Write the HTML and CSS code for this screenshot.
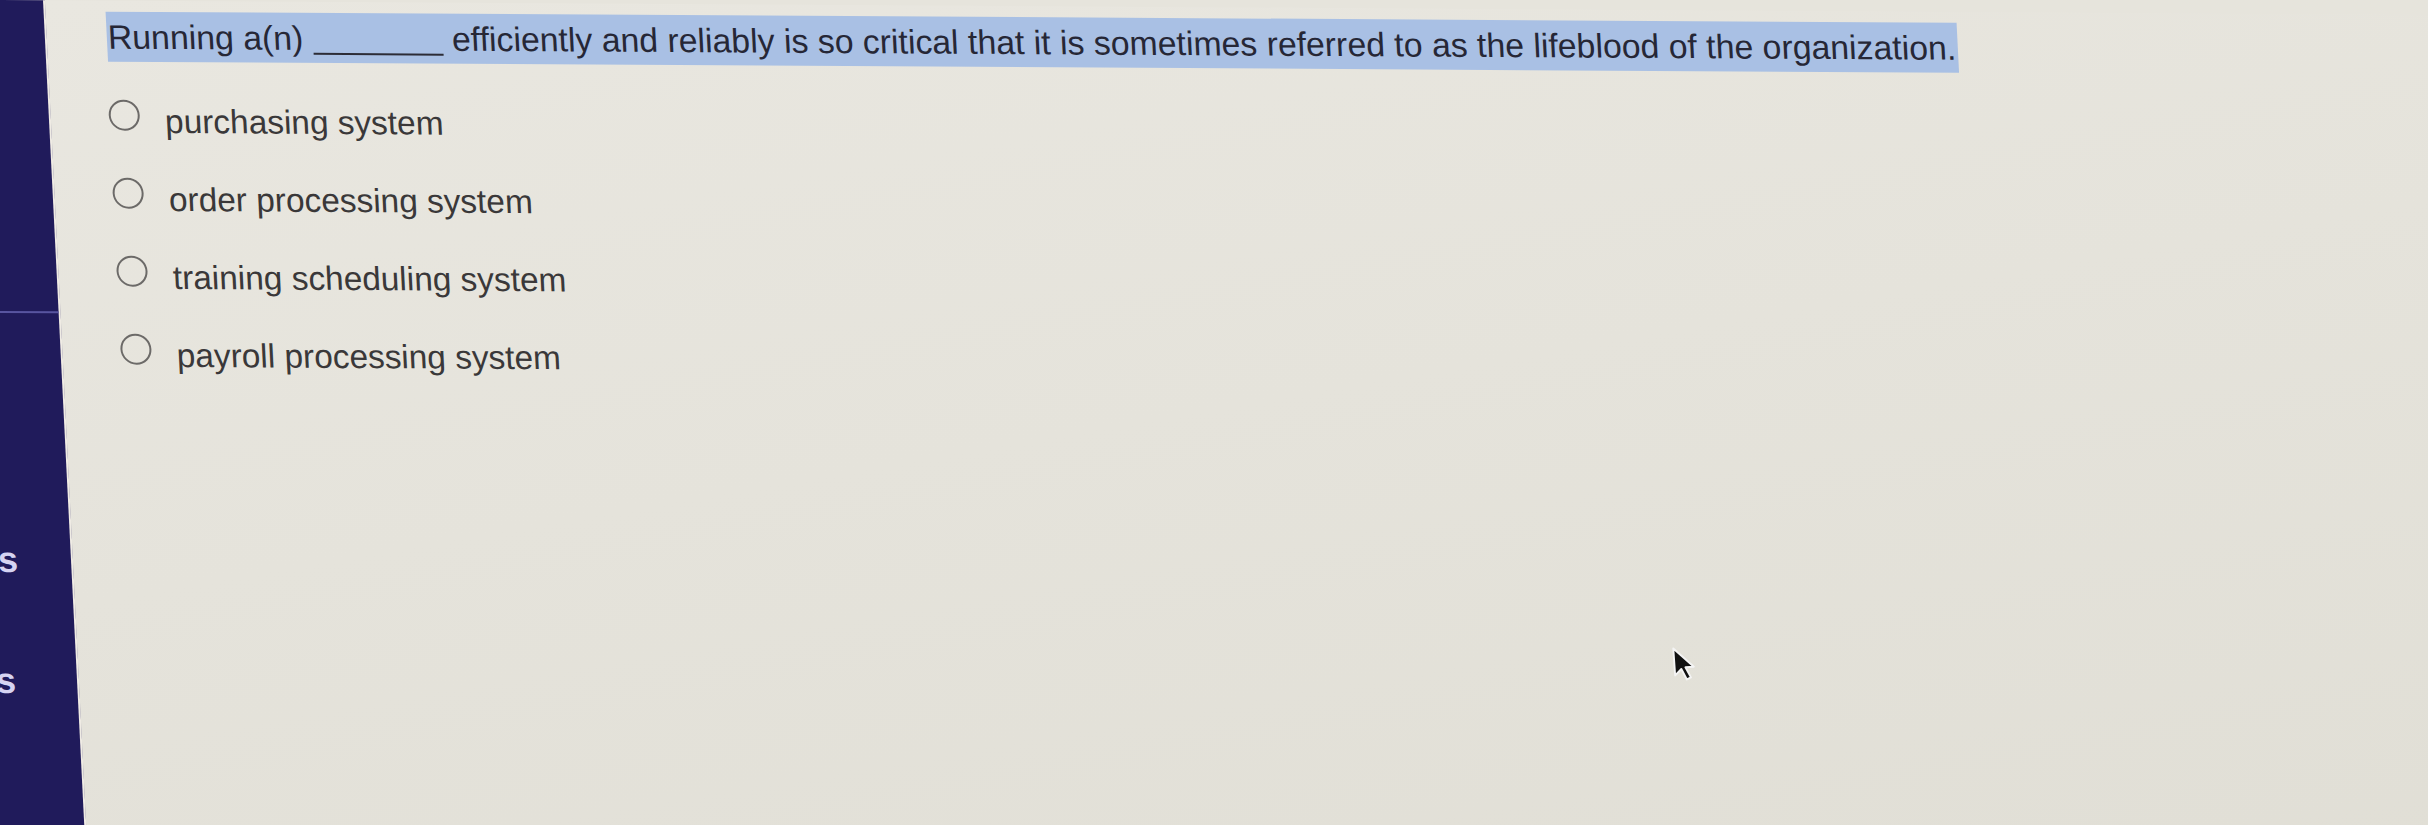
FILE: index.html
```html
<!DOCTYPE html>
<html lang="en">
<head>
<meta charset="utf-8">
<title>Quiz question</title>
<link rel="stylesheet" href="styles.css">
</head>
<body>
<div class="screen">
  <aside class="sidebar">
    <div class="sidebar-top"></div>
    <nav class="nav">
      <span class="nav-item">Courses</span>
      <span class="nav-item">Groups</span>
    </nav>
  </aside>
  <main class="content">
    <p class="question"><span class="hl">Running a(n) <span class="blank"></span> efficiently and reliably is so critical that it is sometimes referred to as the lifeblood of the organization.</span></p>
    <div class="options">
      <label class="option"><span class="radio"></span><span class="opt-text">purchasing system</span></label>
      <label class="option"><span class="radio"></span><span class="opt-text">order processing system</span></label>
      <label class="option"><span class="radio"></span><span class="opt-text">training scheduling system</span></label>
      <label class="option"><span class="radio"></span><span class="opt-text">payroll processing system</span></label>
    </div>
  </main>
</div>
<svg class="cursor" width="24" height="36" viewBox="0 0 20 30" aria-hidden="true">
  <path d="M2 1.5 L2 24 L7.5 19 L11.5 28 L15 26.5 L11 17.8 L18 17.8 Z" fill="#111" stroke="#f4f4f4" stroke-width="1.6" stroke-linejoin="round"/>
</svg>
</body>
</html>
```
FILE: styles.css
```css
html, body {
  margin: 0;
  padding: 0;
}
body {
  width: 2428px;
  height: 825px;
  overflow: hidden;
  position: relative;
  background: #e6e4dc;
  font-family: "Liberation Sans", Arial, Helvetica, sans-serif;
}
.screen {
  display: flex;
  margin-left: -207px;
  width: 2760px;
  height: 900px;
  transform-origin: 207px 0;
  transform: matrix(1, 0.006, 0.05, 1, 0, 0);
}
.sidebar {
  width: 250px;
  flex-shrink: 0;
  background: #201b5b;
  border-right: 2px solid #efebe4;
  display: flex;
  flex-direction: column;
}
.sidebar-top {
  height: 311px;
  border-bottom: 2px solid #5855a0;
}
.nav {
  display: flex;
  flex-direction: column;
  align-items: center;
  gap: 77px;
  padding-top: 225px;
}
.nav-item {
  font-weight: 700;
  font-size: 36px;
  line-height: 44px;
  color: #d6d4f2;
}
.content {
  flex: 1;
  padding: 11px 0 0 60px;
  background: linear-gradient(170deg, #e9e7e0 0%, #e5e3db 45%, #e0ded5 100%);
}
.question {
  margin: 0;
}
.hl {
  display: inline-block;
  background: #a9c0e4;
  color: #262736;
  font-size: 33.8px;
  line-height: 50px;
  padding: 0 2px 0 1px;
  white-space: nowrap;
}
.blank {
  display: inline-block;
  width: 130px;
  height: 0;
  border-bottom: 2px solid #2c2c36;
  vertical-align: -5px;
}
.options {
  display: flex;
  flex-direction: column;
  gap: 38px;
  margin-top: 40px;
}
.option {
  display: flex;
  align-items: flex-start;
  height: 40px;
}
.radio {
  width: 27px;
  height: 27px;
  border: 2px solid #6c6a68;
  border-radius: 50%;
  margin: -2px 25px 0 -2px;
  flex-shrink: 0;
}
.opt-text {
  font-size: 33.4px;
  line-height: 40px;
  color: #3a3839;
}
.cursor {
  position: absolute;
  left: 1672px;
  top: 646px;
  transform: rotate(-4deg);
}
```
